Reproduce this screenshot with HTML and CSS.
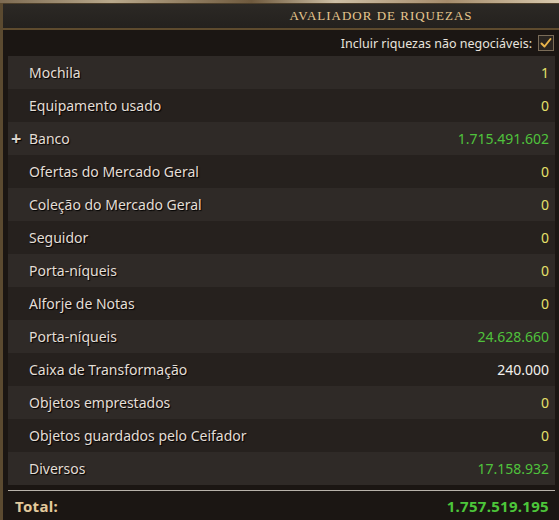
FILE: index.html
```html
<!DOCTYPE html>
<html lang="pt">
<head>
  <meta charset="UTF-8" />
  <title>Avaliador de Riquezas</title>
  <link rel="stylesheet" href="styles.css">
</head>
<body>
  <div class="scene-strip"></div>

  <div class="wealth-window">
    <div class="title-bar">
      <h2>Avaliador de Riquezas</h2>
    </div>

    <div class="window-body">
      <label class="option-row">
        <span>Incluir riquezas não negociáveis:</span>
        <span class="check-box">
          <svg width="12" height="12" viewBox="0 0 12 12">
            <path d="M1.5 6.5 L4.5 9.5 L10.5 2" fill="none" stroke="#e8b44a" stroke-width="2" stroke-linecap="round" stroke-linejoin="round"/>
          </svg>
        </span>
      </label>

      <ul class="wealth-list">
        <li><span class="label">Mochila</span><span class="value yellow">1</span></li>
        <li><span class="label">Equipamento usado</span><span class="value yellow">0</span></li>
        <li><span class="label"><span class="expand">+</span>Banco</span><span class="value green">1.715.491.602</span></li>
        <li><span class="label">Ofertas do Mercado Geral</span><span class="value yellow">0</span></li>
        <li><span class="label">Coleção do Mercado Geral</span><span class="value yellow">0</span></li>
        <li><span class="label">Seguidor</span><span class="value yellow">0</span></li>
        <li><span class="label">Porta-níqueis</span><span class="value yellow">0</span></li>
        <li><span class="label">Alforje de Notas</span><span class="value yellow">0</span></li>
        <li><span class="label">Porta-níqueis</span><span class="value green">24.628.660</span></li>
        <li><span class="label">Caixa de Transformação</span><span class="value white">240.000</span></li>
        <li><span class="label">Objetos emprestados</span><span class="value yellow">0</span></li>
        <li><span class="label">Objetos guardados pelo Ceifador</span><span class="value yellow">0</span></li>
        <li><span class="label">Diversos</span><span class="value green">17.158.932</span></li>
      </ul>

      <div class="total-row">
        <span class="total-label">Total:</span>
        <span class="total-value">1.757.519.195</span>
      </div>
    </div>
  </div>
</body>
</html>
```

FILE: styles.css
```css
* {
  margin: 0;
  padding: 0;
  box-sizing: border-box;
}

body {
  width: 559px;
  height: 520px;
  overflow: hidden;
  background: #1a1512;
  font-family: 'Noto Sans', 'Open Sans', sans-serif;
  color: #e4ded6;
}

.scene-strip {
  height: 3px;
  background: linear-gradient(90deg, #7d6b52 0%, #b9a98c 20%, #6f5a3e 45%, #cdbfa5 60%, #a58c6c 80%, #d8c9ae 100%);
}

.wealth-window {
  border-left: 3px solid #5b4a30;
  height: 517px;
}

.title-bar {
  height: 27px;
  background: linear-gradient(#2c2925, #24211e);
  border-top: 1px solid #4d3f2a;
  border-bottom: 2px solid #5e4b2e;
  display: flex;
  align-items: center;
  justify-content: center;
  padding-left: 200px;
}

.title-bar h2 {
  font-family: 'Liberation Serif', 'DejaVu Serif', serif;
  font-weight: normal;
  font-size: 13px;
  letter-spacing: 1px;
  text-transform: uppercase;
  color: #e6c78f;
}

.window-body {
  padding: 0 4px 0 5px;
  background: #1b1613;
}

.option-row {
  display: flex;
  justify-content: flex-end;
  align-items: center;
  gap: 6px;
  height: 26px;
  padding-right: 1px;
  font-size: 12.5px;
  color: #e8e4de;
}

.check-box {
  width: 16px;
  height: 16px;
  border: 1px solid #7a6c58;
  background: #2a2520;
  display: flex;
  align-items: center;
  justify-content: center;
}

.wealth-list {
  list-style: none;
}

.wealth-list li {
  height: 33px;
  display: flex;
  justify-content: space-between;
  align-items: center;
  padding: 0 6px 0 21px;
  font-size: 14px;
  background: #26211e;
}

.wealth-list li:nth-child(odd) {
  background: #2f2a27;
}

.label {
  position: relative;
  text-shadow: 1px 1px 1px #000;
}

.expand {
  position: absolute;
  left: -18px;
  top: -3px;
  font-size: 18px;
  font-weight: bold;
  color: #d8d2ca;
}

.value.yellow {
  color: #e5e06a;
}

.value.green {
  color: #4fc23c;
}

.value.white {
  color: #f2f0ec;
}

.total-row {
  margin-top: 5px;
  border-top: 1px solid #b8b2aa;
  height: 30px;
  display: flex;
  justify-content: space-between;
  align-items: center;
  padding: 0 6px 0 7px;
  font-size: 15px;
  font-weight: bold;
  letter-spacing: 0.3px;
}

.total-label {
  color: #e2c99c;
}

.total-value {
  color: #4cc63a;
}
```
